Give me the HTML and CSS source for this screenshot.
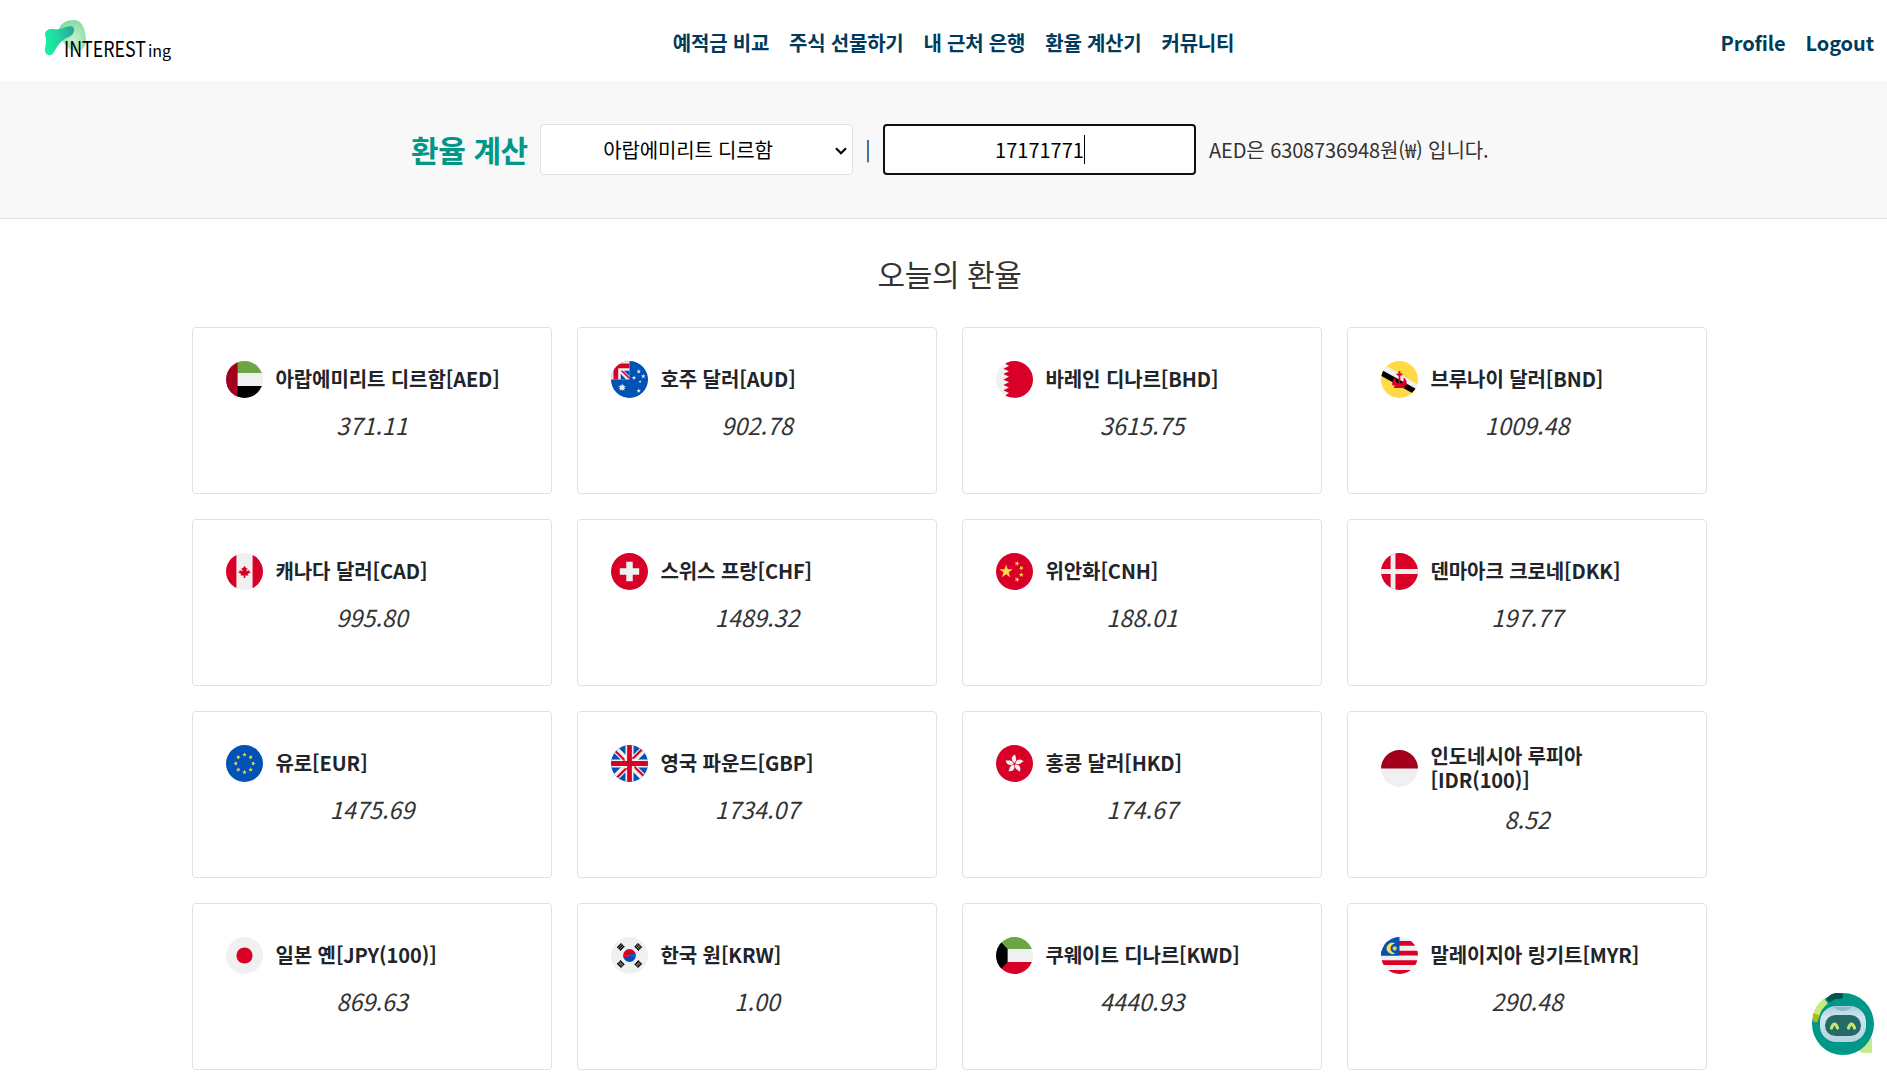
FILE: index.html
```html
<!DOCTYPE html>
<html lang="ko">
<head>
<meta charset="utf-8">
<title>INTERESTing</title>
<link rel="stylesheet" href="styles.css">
</head>
<body>
<svg class="defs" aria-hidden="true">
  <defs>
    <polygon id="star" points="0,-1 .2245,-.309 .951,-.309 .363,.118 .588,.809 0,.382 -.588,.809 -.363,.118 -.951,-.309 -.2245,-.309"/>
    <path id="petal" d="M0-12C-52-38-52-108 10-130C6-96 50-62 0-12z"/>
    <g id="bars"><path d="M-42-26H42M-42 0H42M-42 26H42"/></g>
    <linearGradient id="blob" x1="0" y1=".4" x2="1" y2=".2"><stop offset="0" stop-color="#17f0a2"/><stop offset=".45" stop-color="#22d4a0"/><stop offset="1" stop-color="#2ba39b"/></linearGradient>
    <radialGradient id="halo" cx=".55" cy=".65" r=".65"><stop offset="0" stop-color="#c3f2d2"/><stop offset="1" stop-color="#86dba0"/></radialGradient>
    <linearGradient id="helmet" x1="0" y1="0" x2="0" y2="1"><stop offset="0" stop-color="#a9ccdb"/><stop offset=".3" stop-color="#cfe6ee"/><stop offset="1" stop-color="#b4d3df"/></linearGradient>
  </defs>
</svg>

<header class="header">
  <a class="logo">
    <svg width="132" height="46" viewBox="0 0 132 46">
      <path d="M19 12C20 5 27 2 34 2C43 2 46 14 46 22C46 30 41 34 35 33C28 32 21 24 19 12z" fill="url(#halo)"/>
      <path d="M5 17C5 12 9 10.500 13 11C20 12.500 26 8 31 8C36 9 34.500 16 30 18.500C22 21 18 27 14 34C11 39 5 38 5 32C5 27 7.500 24 5 17z" fill="url(#blob)"/>
      <text x="24" y="39" font-size="22" textLength="82" lengthAdjust="spacingAndGlyphs">INTEREST</text>
      <text x="108" y="39" font-size="16" textLength="23" lengthAdjust="spacing">ing</text>
    </svg>
  </a>
  <nav class="menu">
    <a>예적금 비교</a><a>주식 선물하기</a><a>내 근처 은행</a><a>환율 계산기</a><a>커뮤니티</a>
  </nav>
  <nav class="account"><a>Profile</a><a>Logout</a></nav>
</header>

<section class="calc">
  <h1 class="calc-title">환율 계산</h1>
  <div class="field field-select">
    <span>아랍에미리트 디르함</span>
    <svg class="chevron" width="12" height="8" viewBox="0 0 12 8"><path d="M1 1.2L6 6.2L11 1.2" fill="none" stroke="#000" stroke-width="2.200"/></svg>
  </div>
  <span class="divider">|</span>
  <div class="field field-input"><span>17171771</span><i class="caret"></i></div>
  <p class="result">AED은 6308736948원(₩) 입니다.</p>
</section>

<main class="rates">
  <h2 class="rates-title">오늘의 환율</h2>
  <div class="grid">
    <article class="card">
      <div class="name"><svg class="flag" viewBox="0 0 512 512"><path fill="#f0f0f0" d="M0 0h512v512H0z"/><path fill="#6da544" d="M0 0h512v167H0z"/><path d="M0 345h512v167H0z"/><path fill="#a2001d" d="M0 0h161v512H0z"/></svg><h3>아랍에미리트 디르함[AED]</h3></div>
      <p class="value">371.11</p>
    </article>
    <article class="card">
      <div class="name"><svg class="flag" viewBox="0 0 512 512"><path fill="#0052b4" d="M0 0h512v512H0z"/><path fill="#f0f0f0" d="M0 0h256v256H0z"/><path fill="#d80027" d="M0 34h256v66H100v156H34V34zM134 134h31l91 91v31z"/><path fill="#0052b4" d="M256 134v78l-78-78zM134 256v-78l78 78z"/><g fill="#f0f0f0"><use href="#star" transform="translate(154 367) scale(57)"/><use href="#star" transform="translate(154 367) rotate(36) scale(50)"/><use href="#star" transform="translate(384 411) scale(34)"/><use href="#star" transform="translate(318 232) scale(32)"/><use href="#star" transform="translate(384 145) scale(34)"/><use href="#star" transform="translate(446 212) scale(34)"/><use href="#star" transform="translate(402 284) scale(22)"/></g></svg><h3>호주 달러[AUD]</h3></div>
      <p class="value">902.78</p>
    </article>
    <article class="card">
      <div class="name"><svg class="flag" viewBox="0 0 512 512"><path fill="#f0f0f0" d="M0 0h512v512H0z"/><path fill="#d80027" d="M512 0H130v38l50 30-78 38 78 37-78 37 78 38-78 38 78 38-78 37 78 37-78 38 78 37-50 30v37h382z"/></svg><h3>바레인 디나르[BHD]</h3></div>
      <p class="value">3615.75</p>
    </article>
    <article class="card">
      <div class="name"><svg class="flag" viewBox="0 0 512 512"><path fill="#ffda44" d="M0 0h512v512H0z"/><path fill="#f0f0f0" d="M60 60L512 330L480 395L10 130z"/><path d="M10 125L482 385L430 442L0 205z"/><path fill="#d80027" d="M244 140h24v34h34l-12 26h-22v110c40-8 52-40 42-82c36 20 56 60 42 112h-32l16 34H176l16-34h-32c-14-52 6-92 42-112c-10 42 2 74 42 82V200h-22l-12-26h34z"/></svg><h3>브루나이 달러[BND]</h3></div>
      <p class="value">1009.48</p>
    </article>

    <article class="card">
      <div class="name"><svg class="flag" viewBox="0 0 512 512"><path fill="#f0f0f0" d="M0 0h512v512H0z"/><path fill="#d80027" d="M0 0h144v512H0zM368 0h144v512H368zM299.500 290.500l45.100-22.500-22.500-11.300v-22.500l-45.100 22.500 22.500-45.100H277L256 178l-22.500 33.700H211l22.500 45.100-45.100-22.500v22.500L165.800 268l45.100 22.500-11.300 22.500h45.100v33.800h22.500V313h45.100z"/></svg><h3>캐나다 달러[CAD]</h3></div>
      <p class="value">995.80</p>
    </article>
    <article class="card">
      <div class="name"><svg class="flag" viewBox="0 0 512 512"><path fill="#d80027" d="M0 0h512v512H0z"/><path fill="#f0f0f0" d="M211 122h90v89h89v90h-89v89h-90v-89h-89v-90h89z"/></svg><h3>스위스 프랑[CHF]</h3></div>
      <p class="value">1489.32</p>
    </article>
    <article class="card">
      <div class="name"><svg class="flag" viewBox="0 0 512 512"><path fill="#d80027" d="M0 0h512v512H0z"/><g fill="#ffda44"><use href="#star" transform="translate(140 256) scale(98)"/><use href="#star" transform="translate(291 147) rotate(20) scale(38)"/><use href="#star" transform="translate(350 209) rotate(45) scale(38)"/><use href="#star" transform="translate(350 301) scale(38)"/><use href="#star" transform="translate(291 367) rotate(20) scale(38)"/></g></svg><h3>위안화[CNH]</h3></div>
      <p class="value">188.01</p>
    </article>
    <article class="card">
      <div class="name"><svg class="flag" viewBox="0 0 512 512"><path fill="#d80027" d="M0 0h512v512H0z"/><path fill="#f0f0f0" d="M133 0h67v223h312v66H200v223h-67V289H0v-66h133z"/></svg><h3>덴마아크 크로네[DKK]</h3></div>
      <p class="value">197.77</p>
    </article>

    <article class="card">
      <div class="name"><svg class="flag" viewBox="0 0 512 512"><path fill="#0052b4" d="M0 0h512v512H0z"/><g fill="#ffda44"><use href="#star" transform="translate(256 134) scale(34)"/><use href="#star" transform="translate(342 170) rotate(45) scale(34)"/><use href="#star" transform="translate(378 256) rotate(90) scale(34)"/><use href="#star" transform="translate(342 342) rotate(135) scale(34)"/><use href="#star" transform="translate(256 378) scale(34)"/><use href="#star" transform="translate(170 342) rotate(45) scale(34)"/><use href="#star" transform="translate(134 256) rotate(-90) scale(34)"/><use href="#star" transform="translate(170 170) rotate(-45) scale(34)"/></g></svg><h3>유로[EUR]</h3></div>
      <p class="value">1475.69</p>
    </article>
    <article class="card">
      <div class="name"><svg class="flag" viewBox="0 0 512 512"><path fill="#0052b4" d="M0 0h512v512H0z"/><path d="M60 60L452 452M452 60L60 452" stroke="#f0f0f0" stroke-width="95"/><path d="M200 0h112v200h200v112H312v200H200V312H0V200h200z" fill="#f0f0f0"/><path d="M50 72L200 222M440 50L290 200M462 440L312 290M72 462L222 312" stroke="#d80027" stroke-width="30"/><path d="M189 189h134v134H189z" fill="#f0f0f0"/><path fill="#d80027" d="M223 0h66v223h223v66H289v223h-66V289H0v-66h223z"/></svg><h3>영국 파운드[GBP]</h3></div>
      <p class="value">1734.07</p>
    </article>
    <article class="card">
      <div class="name"><svg class="flag" viewBox="0 0 512 512"><path fill="#d80027" d="M0 0h512v512H0z"/><g fill="#f0f0f0" transform="translate(256 260)"><use href="#petal"/><use href="#petal" transform="rotate(72)"/><use href="#petal" transform="rotate(144)"/><use href="#petal" transform="rotate(216)"/><use href="#petal" transform="rotate(288)"/></g></svg><h3>홍콩 달러[HKD]</h3></div>
      <p class="value">174.67</p>
    </article>
    <article class="card">
      <div class="name"><svg class="flag" viewBox="0 0 512 512"><path fill="#f0f0f0" d="M0 0h512v512H0z"/><path fill="#a2001d" d="M0 0h512v256H0z"/></svg><h3>인도네시아 루피아<wbr>[IDR(100)]</h3></div>
      <p class="value">8.52</p>
    </article>

    <article class="card">
      <div class="name"><svg class="flag" viewBox="0 0 512 512"><path fill="#f0f0f0" d="M0 0h512v512H0z"/><circle cx="256" cy="256" r="112" fill="#d80027"/></svg><h3>일본 옌[JPY(100)]</h3></div>
      <p class="value">869.63</p>
    </article>
    <article class="card">
      <div class="name"><svg class="flag" viewBox="0 0 512 512"><path fill="#f0f0f0" d="M0 0h512v512H0z"/><path fill="#d80027" d="M167 256a89 89 0 0 1 178 0z"/><path fill="#0052b4" d="M167 256a89 89 0 0 0 178 0z"/><path fill="#d80027" d="M167 256c0 30 89 40 89 0z"/><path fill="#0052b4" d="M256 256c0-40 89-30 89 0z"/><g stroke="#000" stroke-width="20" fill="none"><use href="#bars" transform="translate(135 137) rotate(-45)"/><use href="#bars" transform="translate(377 137) rotate(45)"/><use href="#bars" transform="translate(135 375) rotate(45)"/><use href="#bars" transform="translate(377 375) rotate(-45)"/></g><path d="M360 154L394 120M118 358L152 392M360 392L394 358" stroke="#f0f0f0" stroke-width="8"/></svg><h3>한국 원[KRW]</h3></div>
      <p class="value">1.00</p>
    </article>
    <article class="card">
      <div class="name"><svg class="flag" viewBox="0 0 512 512"><path fill="#f0f0f0" d="M0 0h512v512H0z"/><path fill="#6da544" d="M0 0h512v167H0z"/><path fill="#d80027" d="M0 345h512v167H0z"/><path d="M0 0l75 75 86 92v178l-86 92L0 512z"/></svg><h3>쿠웨이트 디나르[KWD]</h3></div>
      <p class="value">4440.93</p>
    </article>
    <article class="card">
      <div class="name"><svg class="flag" viewBox="0 0 512 512"><path fill="#f0f0f0" d="M0 0h512v512H0z"/><path fill="#d80027" d="M0 57h512v64H0zM0 190h512v66H0zM0 323h512v66H0zM0 456h512v56H0z"/><path fill="#0052b4" d="M0 0h256v256H0z"/><path fill="#ffda44" fill-rule="evenodd" d="M198 92A78 78 0 1 0 198 224A66 66 0 1 1 198 92z"/><use href="#star" fill="#ffda44" transform="translate(190 158) scale(42)"/><use href="#star" fill="#ffda44" transform="translate(190 158) rotate(36) scale(38)"/></svg><h3>말레이지아 링기트[MYR]</h3></div>
      <p class="value">290.48</p>
    </article>
  </div>
</main>

<button class="chatbot" aria-label="chatbot">
  <svg width="62" height="62" viewBox="0 0 62 62">
    <path d="M46 56L60 44V60H50z" fill="#c8ea8e"/>
    <circle cx="31" cy="31" r="31" fill="#009688"/>
    <path d="M18 6Q22 2 28 3" stroke="#00574d" stroke-width="6" stroke-linecap="round" fill="none"/>
    <path d="M3.500 24Q6 14 14 8" stroke="#c8ea7c" stroke-width="6.500" fill="none"/>
    <path d="M1 20L7 22L6 28Q3 31 1 27z" fill="#b4bd00"/>
    <rect x="8" y="13" width="46" height="36" rx="16" fill="url(#helmet)"/>
    <path d="M22 14Q31 22 40 14z" fill="#8fb8c9"/>
    <rect x="13" y="22" width="36" height="21" rx="10.500" fill="#256a69"/>
    <path d="M19.500 35Q22.500 27 25.500 35M36.500 35Q39.500 27 42.500 35" fill="none" stroke="#c9e66b" stroke-width="3.200" stroke-linecap="round"/>
  </svg>
</button>
</body>
</html>
```
FILE: styles.css
```css
* { box-sizing: border-box; }

body {
  margin: 0;
  height: 1077px;
  overflow: hidden;
  background: #fff;
  color: #212529;
  font-family: "Noto Sans CJK KR", "Noto Sans", sans-serif;
  font-size: 20px;
  line-height: 24px;
}

h1, h2, h3, p { margin: 0; }

.defs { position: absolute; width: 0; height: 0; }

.header {
  display: grid;
  grid-template-columns: 1fr auto 1fr;
  align-items: center;
  height: 81px;
  padding: 5px 13px 0 40px;
}

.logo { display: block; height: 46px; margin-top: -5px; }
.logo svg { display: block; overflow: visible; }

.menu, .account {
  display: flex;
  gap: 20px;
  color: #003b5c;
  font-weight: 700;
}

.menu { margin-right: 7px; letter-spacing: -.22px; }
.account { justify-content: flex-end; letter-spacing: -.1px; }

.calc {
  display: flex;
  align-items: center;
  height: 138px;
  padding: 0 0 1px 411px;
  background: #f8f8f8;
  border-bottom: 1px solid #dee2e6;
}

.calc-title {
  width: 129px;
  color: #009688;
  font-size: 30px;
  font-weight: 700;
  line-height: 36px;
  letter-spacing: -.4px;
}

.field {
  display: flex;
  align-items: center;
  justify-content: center;
  width: 313px;
  height: 51px;
  border: 1px solid #dee2e6;
  border-radius: 4px;
  background: #fff;
  color: #000;
}

.field span { padding-top: 2px; }
.field-select { position: relative; padding-right: 17px; letter-spacing: -.15px; }
.chevron { position: absolute; right: 5px; top: 22px; }
.field-input { border: 2px solid #101010; }
.caret { width: 1px; height: 29px; margin-right: -1px; background: #000; }
.divider { width: 30px; text-align: center; }

.result {
  margin-left: 13px;
  padding-top: 2px;
  color: #333;
  letter-spacing: -.11px;
}

.rates { padding-left: 192px; }

.rates-title {
  width: 1515px;
  padding: 37px 0 36px;
  color: #333;
  font-size: 30px;
  font-weight: 400;
  line-height: 35px;
  letter-spacing: -.4px;
  text-align: center;
}

.grid {
  display: grid;
  grid-template-columns: repeat(4, 360px);
  grid-auto-rows: 167px;
  gap: 25px;
}

.card {
  padding: 33px;
  border: 1px solid #dee2e6;
  border-radius: 4px;
}

.name {
  display: flex;
  align-items: center;
  gap: 12.5px;
}

.name h3 {
  margin-top: -1px;
  font-size: 20px;
  font-weight: 700;
  line-height: 24px;
  letter-spacing: -.1px;
  word-break: keep-all;
}

.flag {
  flex: none;
  width: 37px;
  height: 37px;
  border-radius: 50%;
}

.value {
  padding-top: 12px;
  color: #333;
  font-size: 23.4px;
  font-style: italic;
  line-height: 30px;
  text-align: center;
}

.chatbot {
  position: fixed;
  right: 13px;
  bottom: 22px;
  width: 62px;
  height: 62px;
  padding: 0;
  border: 0;
  background: none;
}

.chatbot svg { display: block; }
```
